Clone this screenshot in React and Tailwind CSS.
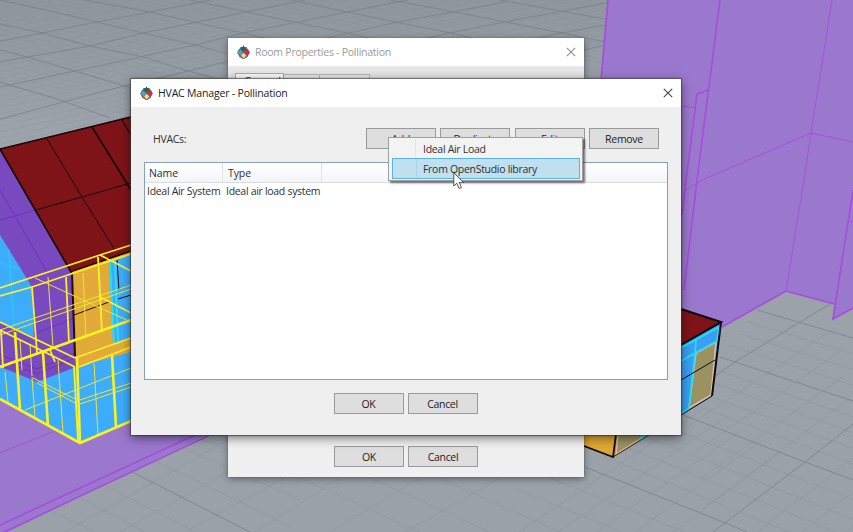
const MAJOR_A = [
  [[0, 41], [43, 33], [97, 22], [150, 12], [210, 0]],
  [[0, 62], [27, 57], [90, 46], [143, 33], [197, 22], [247, 12], [305, 0]],
  [[0, 87], [75, 71], [144, 56], [195, 45], [243, 33], [347, 12], [408, 0]],
  [[0, 119], [60, 103], [120, 87], [188, 71], [295, 45], [398, 22], [505, 2]],
  [[0, 150], [131, 116], [300, 66], [450, 33], [505, 22], [610, 2]],
  [[450, 57], [562, 33], [610, 24]],
  [[540, 60], [610, 44]],
];
const MAJOR_B = [
  [[0, 82], [60, 100], [110, 118]],
  [[0, 50], [27, 57], [75, 71], [131, 88]],
  [[0, 24], [43, 33], [90, 46], [144, 57], [188, 71], [228, 82]],
  [[0, 0], [55, 12], [97, 22], [143, 33], [195, 45], [240, 57]],
  [[85, 0], [150, 12], [243, 33], [280, 42]],
  [[190, 0], [247, 12], [347, 33], [380, 41]],
  [[290, 0], [347, 12], [450, 33], [480, 40]],
  [[390, 0], [455, 12], [562, 33], [610, 43]],
  [[500, 0], [555, 10], [610, 20]],
];
const FLOOR_MAJOR = [
  [[713, 532], [805, 462], [853, 424]],
  [[683, 399], [735, 362], [800, 322], [830, 304]],
  [[720, 357], [853, 401]],
  [[683, 415], [805, 462], [853, 480]],
  [[585, 467], [723, 522], [747, 532]],
  [[757, 310], [853, 338]],
  [[132, 472], [250, 532]],
];
const lerp = (a, b, t) => [a[0] + (b[0] - a[0]) * t, a[1] + (b[1] - a[1]) * t];
const between = (l1, l2, n) =>
  Array.from({ length: n }, (_, i) => {
    const t = (i + 1) / (n + 1);
    return [lerp(l1[0], l2[0], t), lerp(l1[1], l2[1], t)];
  });
const FLOOR_MINOR = [
  ...between([[683, 399], [830, 304]], [[713, 532], [853, 424]], 4),
  ...between([[713, 532], [853, 424]], [[853, 560], [880, 540]], 3),
  ...between([[480, 532], [683, 399]], [[713, 532], [800, 462]], 5),
  ...between([[757, 310], [853, 338]], [[720, 357], [853, 401]], 3),
  ...between([[720, 357], [853, 401]], [[683, 415], [853, 480]], 4),
  ...between([[683, 415], [853, 480]], [[585, 467], [853, 578]], 4),
  ...between([[585, 467], [747, 532]], [[480, 500], [560, 532]], 2),
  [[155, 461], [290, 526]], [[182, 448], [300, 500]], [[200, 438], [300, 482]],
  [[105, 485], [195, 532]], [[80, 498], [145, 532]], [[52, 511], [95, 532]],
  [[65, 532], [228, 440]], [[120, 532], [228, 472]], [[185, 532], [290, 475]],
  [[255, 532], [340, 478]], [[330, 532], [420, 478]], [[405, 532], [500, 478]],
  [[300, 478], [420, 532]], [[370, 478], [490, 532]], [[440, 478], [560, 532]],
];
const TOP_MINOR = [
  ...Array.from({ length: 30 }, (_, i) => [[0, i * 6 - 6], [620, i * 6 - 144]]),
  ...Array.from({ length: 36 }, (_, i) => [[i * 20 - 340, 0], [i * 20 + 240, 142]]),
];
const pts = (l) => l.map((p) => p.join(",")).join(" ");
const Lines = ({ items, ...rest }) => (
  <g fill="none" {...rest}>
    {items.map((l, i) => <polyline key={i} points={pts(l)} />)}
  </g>
);

function Scene() {
  return (
    <svg className="absolute inset-0" width="853" height="532" viewBox="0 0 853 532">
      <defs>
        <linearGradient id="floor" x1="0" y1="0" x2="0" y2="1">
          <stop offset="0" stopColor="#8f969e" />
          <stop offset="0.25" stopColor="#9ca3ab" />
          <stop offset="1" stopColor="#9aa1a9" />
        </linearGradient>
      </defs>
      <rect width="853" height="532" fill="url(#floor)" />
      <Lines items={TOP_MINOR} stroke="#878e96" strokeWidth="0.6" opacity="0.35" />
      <Lines items={[...MAJOR_A, ...MAJOR_B]} stroke="#7a8189" strokeWidth="0.8" />
      <Lines items={FLOOR_MINOR} stroke="#8c939b" strokeWidth="0.8" opacity="0.6" />
      <Lines items={FLOOR_MAJOR} stroke="#7f868e" strokeWidth="0.9" />

      {/* shade planes */}
      <polygon points="608,0 853,0 853,308 833,319 834,304 786,291 722,327 680,350 590,200" fill="#9a78ce" />
      <Lines
        stroke="#a94ae0" strokeWidth="1.6"
        items={[
          [[608, 0], [601, 80]], [[720, 0], [697, 180], [684, 290]],
          [[708, 90], [697, 94], [686, 180], [682, 215]],
          [[722, 327], [786, 291], [834, 304]], [[853, 190], [833, 319], [853, 308]],
        ]}
      />
      <Lines
        stroke="#a94fdc" strokeWidth="1"
        items={[
          [[832, 0], [811, 133], [804, 180], [786, 291]], [[682, 106], [695, 108]],
          [[684, 191], [702, 180], [811, 133], [853, 142]], [[850, 222], [853, 221]],
        ]}
      />
      <polygon points="0,390 80,443 130,420 208,434 8,532 0,532" fill="#9a78ce" />
      <Lines stroke="#a94ae0" strokeWidth="1.5" items={[[[0, 525], [197, 434]], [[2, 533], [212, 434]]]} />
      <Lines stroke="#a94fdc" strokeWidth="1" items={[[[0, 453], [52, 432]]]} />

      {/* house */}
      <polygon points="0,149 71,272 77,368 37,382 0,367" fill="#7949c0" />
      <polygon points="0,235 32,287 34,337 0,322" fill="#3dacfb" />
      <Lines stroke="#2cc8fb" strokeWidth="1.3" items={[[[9, 250], [14, 326]], [[0, 262], [20, 270]]]} />
      <Lines stroke="#6f2fb8" strokeWidth="0.9" items={[[[0, 190], [48, 274]], [[0, 220], [36, 210]], [[34, 334], [74, 318]], [[0, 360], [37, 374], [75, 358]], [[0, 355], [37, 369], [75, 353]]]} />
      <polygon points="0,149 131,117 131,252 71,272" fill="#7e1417" />
      <Lines stroke="#160608" strokeWidth="1" items={[[[47, 139], [82, 197], [115, 250]], [[36, 210], [82, 197], [131, 183]]]} />
      <Lines stroke="#160608" strokeWidth="1.7" items={[[[0, 149], [131, 117]], [[0, 149], [71, 272], [131, 251]], [[92, 127], [131, 190]]]} />
      <Lines stroke="#160608" strokeWidth="1.2" items={[[[122, 120], [131, 135]]]} />
      <polygon points="72,272 131,252 131,353 76,368" fill="#e2aa38" />
      <polygon points="109,262 131,255 131,338 113,343" fill="#3dacfb" />
      <Lines stroke="#22e3f3" strokeWidth="1.8" items={[[[110, 262], [114, 343]], [[115, 260], [118, 341]]]} />
      <Lines stroke="#17120c" strokeWidth="1" items={[[[117, 260], [119, 290]], [[74, 315], [109, 302]], [[118, 299], [131, 295]]]} />
      <Lines stroke="#17120c" strokeWidth="2" items={[[[72, 274], [75, 356]]]} />
      <polygon points="0,367 37,382 76,367 131,352 131,422 80,443 0,399" fill="#3dacfb" />
      <Lines
        stroke="#ece43e" strokeWidth="1"
        items={[
          [[0, 330], [131, 285]], [[0, 335], [131, 289]], [[35, 278], [131, 322]], [[48, 277], [53, 347]],
          [[83, 273], [86, 338]], [[58, 360], [63, 433]], [[5, 372], [8, 402]], [[32, 377], [35, 418]],
          [[94, 363], [98, 435]], [[25, 410], [131, 368]], [[80, 400], [131, 383]], [[80, 404], [131, 387]],
          [[33, 378], [77, 400]], [[37, 383], [77, 404]], [[30, 344], [32, 376]], [[20, 340], [22, 370]],
        ]}
      />
      <Lines
        stroke="#fbf029" strokeWidth="1.8"
        items={[
          [[0, 288], [100, 255], [131, 245]], [[0, 296], [32, 287], [131, 254]], [[32, 287], [37, 353]],
          [[66, 277], [69, 343]], [[98, 257], [102, 332]], [[0, 322], [75, 358]], [[0, 330], [75, 367]],
          [[100, 255], [131, 271]], [[100, 297], [131, 313]], [[74, 366], [78, 441]], [[79, 367], [131, 347]],
          [[75, 358], [131, 338]], [[1, 330], [3, 368]], [[50, 350], [55, 362]],
        ]}
      />
      <Lines
        stroke="#fbf320" strokeWidth="2.6"
        items={[
          [[0, 367], [131, 320]], [[15, 332], [20, 410]], [[43, 353], [48, 426]], [[112, 355], [116, 427]],
          [[0, 399], [80, 443], [131, 421]], [[77, 358], [80, 443]],
        ]}
      />

      {/* annex */}
      <polygon points="681,309 722,323 681,346" fill="#7e1417" />
      <polygon points="681,345 722,323 712,396 681,415" fill="#3a9ff2" />
      <polygon points="696,353 716,342 711,395 689,408" fill="#9a9261" stroke="#efb59a" strokeWidth="1.5" />
      <Lines stroke="#22dff3" strokeWidth="1.8" items={[[[681, 348], [719, 327], [717, 341], [681, 361]], [[696, 340], [695, 354], [689, 408], [681, 414]]]} />
      <Lines stroke="#0c0a0a" strokeWidth="2" items={[[[681, 309], [721, 322], [681, 345]], [[721, 322], [712, 396]]]} />
      <Lines stroke="#0c0a0a" strokeWidth="1" items={[[[681, 380], [715, 360]], [[712, 396], [681, 415]]]} />
      <polygon points="584,434 616,434 613,457 584,446" fill="#e0a834" />
      <polygon points="616,434 650,434 614,457" fill="#9a9261" />
      <polygon points="641,434 650,434 640,441" fill="#22dff3" />
      <Lines stroke="#efb59a" strokeWidth="1.3" items={[[[618, 434], [616, 454], [642, 438]]]} />
      <Lines stroke="#0c0a0a" strokeWidth="1.8" items={[[[584, 446], [613, 457], [616, 434]]]} />
      <Lines stroke="#0c0a0a" strokeWidth="0.8" items={[[[613, 457], [649, 435]]]} />
    </svg>
  );
}

function Logo() {
  return (
    <svg className="shrink-0" width="13" height="15" viewBox="0 0 13 15">
      <path d="M6.5 2 11 4 12.8 7.5 10.5 12 6.5 14.3 2.5 12 .2 7.5 2 4Z" fill="#56605f" />
      <path d="M6.5 0 7.4 2 10 2.2 8.8 4.8 6.5 5.8 4 4.8 3 2.2 5.6 2Z" fill="#2f6152" />
      <path d="M.4 7.4 3.4 4.6 6.2 7.6 3.6 10.4Z" fill="#45a8c8" />
      <path d="M6 7 9 4.4 12.6 7.2 9.4 10.4Z" fill="#d2303f" />
      <path d="M4 10.4 6.6 7.8 9.4 10.6 6.6 13.4Z" fill="#f0d69a" />
      <path d="M2.2 10 4 10.6 5.4 13 3 11.8Z" fill="#b06a4c" />
      <path d="M8.6 11.8 10.4 9.8 10.6 11.4 8.4 13Z" fill="#4d9a86" />
    </svg>
  );
}

const Close = ({ className }) => (
  <svg className={className} width="10" height="10" viewBox="0 0 10 10">
    <path d="M.8.8 9.2 9.2M9.2.8.8 9.2" stroke="currentColor" strokeWidth="1.1" />
  </svg>
);

const Button = ({ children }) => (
  <button className="flex h-[21px] w-[70px] items-center justify-center border border-[#9a9a9a] bg-[#dedede] text-[#1c1c1c]">
    {children}
  </button>
);

export default function App() {
  return (
    <div className="relative h-[532px] w-[853px] overflow-hidden font-['Open_Sans','Noto_Sans',sans-serif] text-[10.5px] leading-[14px] tracking-[-0.3px] whitespace-nowrap text-[#303030]">
      <Scene />

      <section className="absolute top-[38px] left-[228px] flex h-[439px] w-[356px] flex-col bg-[#f0f0f0] shadow-[0_2px_7px_rgba(0,0,0,0.4),0_0_1px_rgba(60,60,60,0.7)]">
        <header className="flex h-[28px] shrink-0 items-center bg-white pr-2 pl-[9px] text-[#9b9b9b]">
          <Logo />
          <h2 className="ml-[5px] tracking-[-0.25px]">Room Properties - Pollination</h2>
          <Close className="ml-auto text-[#8f8f8f]" />
        </header>
        <nav className="flex flex-1 items-start bg-linear-to-b from-[#eaeaea] to-[#dcdcdc] to-[14px] pt-[7px] pl-[7px]">
          <span className="h-6 w-[49px] border border-[#a8a8a8] bg-[#f6f6f6] pl-2 text-[#222]">General</span>
          <span className="mt-px h-6 w-9 border-y border-r border-[#b4b4b4] bg-[#e4e4e4]" />
          <span className="mt-px h-6 w-[50px] border-y border-r border-[#b4b4b4] bg-[#e4e4e4]" />
        </nav>
        <footer className="flex h-[80px] shrink-0 items-end justify-center gap-1 bg-[#f0f0f0] pb-[10px]">
          <Button>OK</Button>
          <Button>Cancel</Button>
        </footer>
      </section>

      <section className="absolute top-[79px] left-[131px] flex h-[356px] w-[550px] flex-col bg-[#efefef] shadow-[0_3px_10px_rgba(0,0,0,0.5),0_0_1px_1px_rgba(70,70,70,0.6)]">
        <header className="flex h-[28px] shrink-0 items-center bg-white pr-2 pl-[9px] text-[#222]">
          <Logo />
          <h1 className="ml-[5px] tracking-[-0.18px]">HVAC Manager - Pollination</h1>
          <Close className="ml-auto text-[#444]" />
        </header>
        <div className="mt-[21px] flex h-[21px] items-center gap-[4.4px] px-[22px]">
          <span className="mr-auto">HVACs:</span>
          <Button>Add</Button>
          <Button>Duplicate</Button>
          <Button>Edit</Button>
          <Button>Remove</Button>
        </div>
        <div className="mx-[13px] mt-[13px] h-[218px] border border-[#86a0b8] bg-white">
          <div className="flex h-5 items-center border-b border-[#d9dde1] bg-linear-to-b from-white to-[#f3f5f7] tracking-[-0.1px]">
            <span className="w-[78px] border-r border-[#dfe3e8] pl-1 leading-5">Name</span>
            <span className="w-[99px] border-r border-[#dfe3e8] pl-[5px] leading-5">Type</span>
          </div>
          <div className="flex h-[15px] items-center">
            <span className="w-[78px] pl-[2px]">Ideal Air System</span>
            <span className="pl-[3px]">Ideal air load system</span>
          </div>
        </div>
        <footer className="mt-[13px] flex justify-center gap-1 pr-px">
          <Button>OK</Button>
          <Button>Cancel</Button>
        </footer>
      </section>

      <ul className="absolute top-[137px] left-[388px] h-[44px] w-[195px] border border-[#a0a0a0] bg-[#f3f3f3] p-[2px] pt-px shadow-[2px_2px_2px_rgba(0,0,0,0.55)]">
        <li className="ml-px flex h-[19px] items-center">
          <span className="h-full w-6 border-r border-[#e4e4e4]" />
          <span className="pt-px pl-[7px]">Ideal Air Load</span>
        </li>
        <li className="ml-px flex h-[21px] w-[188px] items-center border border-[#58b4dc] bg-[#c0dfef]">
          <span className="h-full w-6 border-r border-[#b2d3e4]" />
          <span className="pl-[6px]">From OpenStudio library</span>
        </li>
      </ul>

      <svg className="absolute top-[172px] left-[453px]" width="12" height="18" viewBox="0 0 12 18">
        <path d="M.8.8V14L3.8 11.2 6 16.4 8.4 15.4 6.2 10.4H10.6Z" fill="#fff" stroke="#444" strokeWidth="0.9" />
      </svg>
    </div>
  );
}
